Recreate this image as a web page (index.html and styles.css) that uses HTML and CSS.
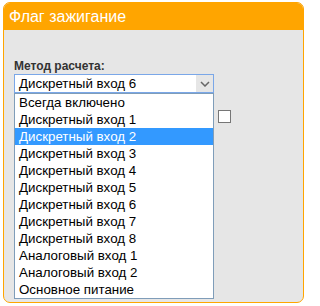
FILE: index.html
```html
<!DOCTYPE html>
<html>
<head>
<meta charset="utf-8">
<link rel="stylesheet" href="styles.css">
</head>
<body>
<div class="panel">
  <div class="header">Флаг зажигание</div>
  <div class="content">
    <div class="label">Метод расчета:</div>
    <div class="row">
      <div class="select-wrap">
        <div class="select">
          <span class="value">Дискретный вход 6</span>
          <span class="arrow"><svg width="10" height="6" viewBox="0 0 10 6"><path d="M1 1 L5 5 L9 1" fill="none" stroke="#666" stroke-width="1.5"/></svg></span>
        </div>
        <ul class="list">
          <li>Всегда включено</li>
          <li>Дискретный вход 1</li>
          <li class="sel">Дискретный вход 2</li>
          <li>Дискретный вход 3</li>
          <li>Дискретный вход 4</li>
          <li>Дискретный вход 5</li>
          <li>Дискретный вход 6</li>
          <li>Дискретный вход 7</li>
          <li>Дискретный вход 8</li>
          <li>Аналоговый вход 1</li>
          <li>Аналоговый вход 2</li>
          <li>Основное питание</li>
        </ul>
      </div>
      <span class="checkbox"></span>
    </div>
  </div>
</div>
</body>
</html>
```
FILE: styles.css
```css
html, body { margin: 0; padding: 0; background: #fff; }
body { font-family: "Liberation Sans", Arial, sans-serif; }
.panel {
  margin: 2px 0 0 3px;
  width: 299px;
  height: 299px;
  border: 1px solid #FFA500;
  border-radius: 7px;
  background: #E6E6E6;
  overflow: hidden;
}
.header {
  background: #FFA500;
  color: #fff;
  font-size: 16px;
  height: 27px;
  line-height: 27px;
  padding-left: 5px;
}
.content { padding: 30px 0 0 10px; }
.label {
  font-size: 12px;
  font-weight: bold;
  color: #333;
  line-height: 13px;
}
.row { display: flex; align-items: flex-start; gap: 4px; margin-top: 1px; }
.select-wrap { position: relative; width: 200px; }
.select {
  box-sizing: border-box;
  height: 19px;
  border: 1px solid #7AA7E8;
  background: #fff;
  display: flex;
  align-items: center;
  font-size: 13.33px;
  color: #000;
}
.value { flex: 1; padding-left: 4px; }
.arrow {
  width: 17px;
  height: 17px;
  background: #E6E6E6;
  display: flex;
  align-items: center;
  justify-content: center;
}
.list {
  position: absolute;
  top: 19px;
  left: 0;
  width: 200px;
  box-sizing: border-box;
  margin: 0;
  padding: 0;
  list-style: none;
  background: #fff;
  border: 1px solid #7F9DB9;
  font-size: 13.33px;
}
.list li { height: 17px; line-height: 17px; padding-left: 4px; color: #000; }
.list li.sel { background: #3399FF; color: #fff; }
.checkbox {
  margin-top: 36px;
  width: 11px;
  height: 11px;
  border: 1px solid #767676;
  background: #fff;
}
```
